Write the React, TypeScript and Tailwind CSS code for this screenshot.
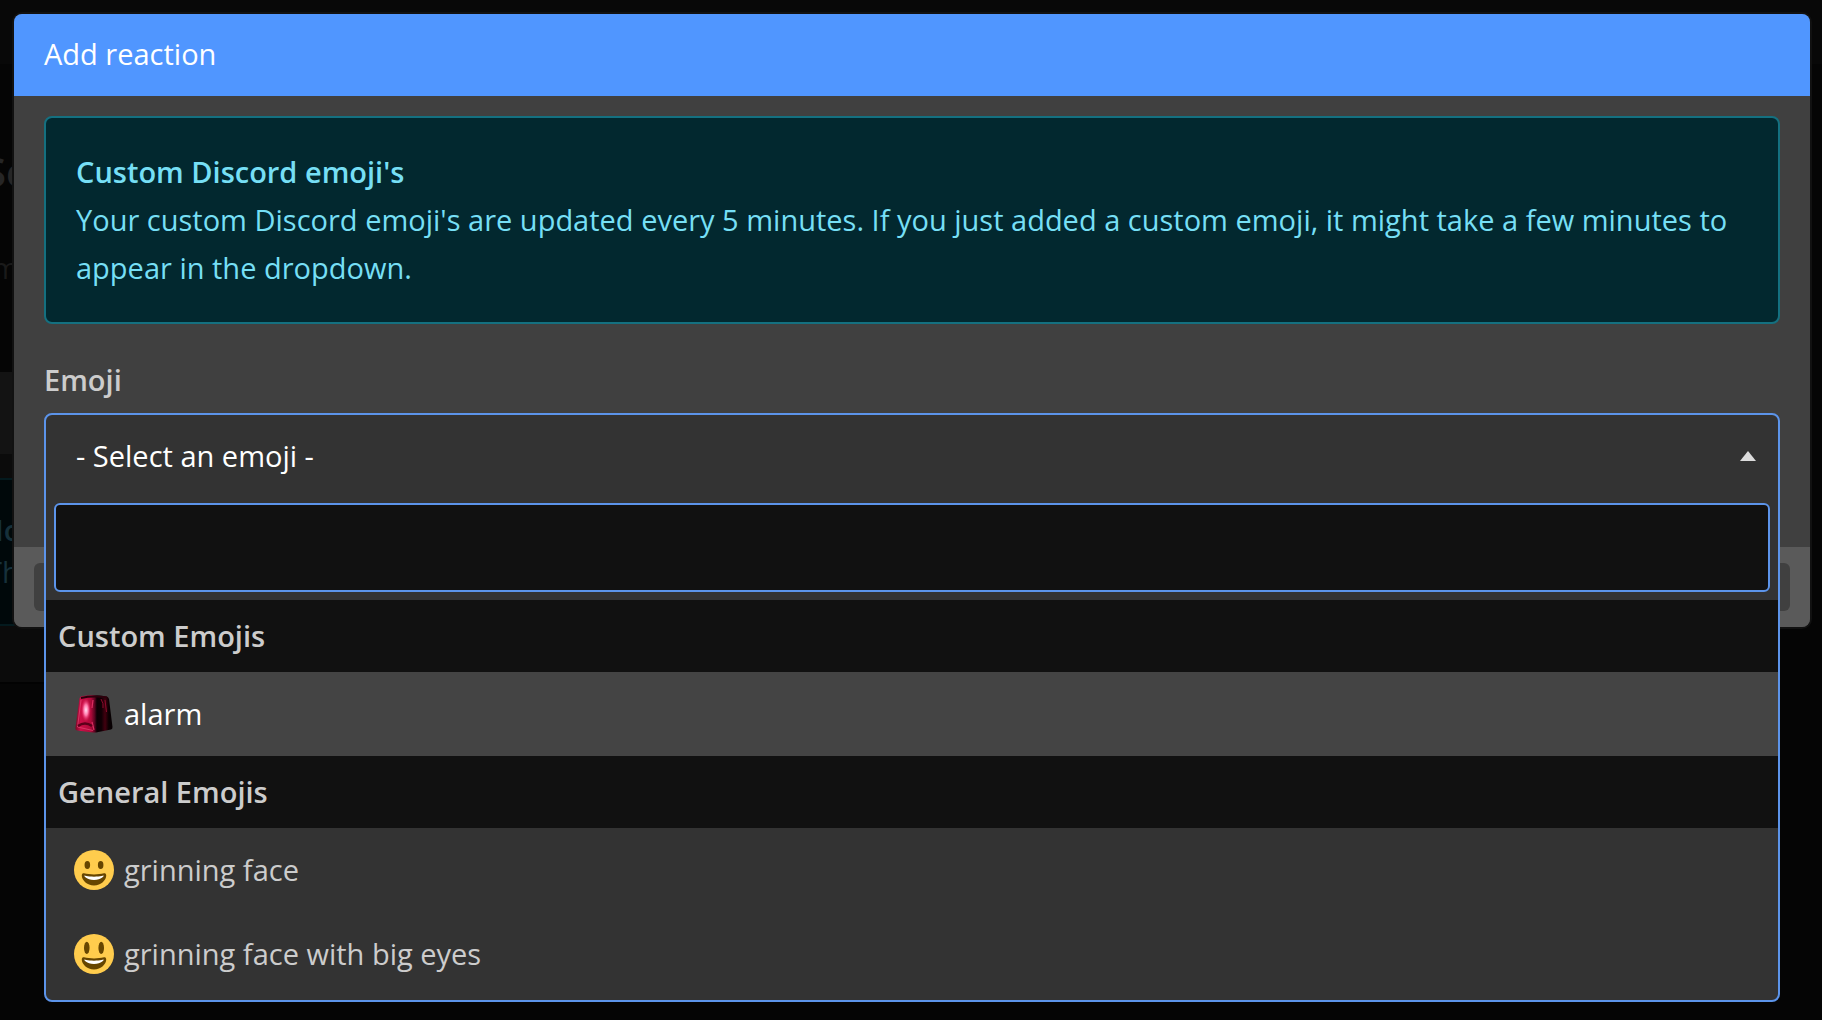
import { useState } from "react";

const groups = [
  {
    label: "Custom Emojis",
    options: [{ name: "alarm", Icon: AlarmIcon }],
  },
  {
    label: "General Emojis",
    options: [
      { name: "grinning face", Icon: GrinningIcon },
      { name: "grinning face with big eyes", Icon: BigEyesIcon },
    ],
  },
];

function AlarmIcon() {
  return (
    <svg viewBox="0 0 40 40" className="size-10 shrink-0" aria-hidden="true">
      <defs>
        <linearGradient id="alarm-glass" x1="0" x2="1" y1="0" y2="0">
          <stop offset="0" stopColor="#7a0826" />
          <stop offset="0.14" stopColor="#cc0f48" />
          <stop offset="0.42" stopColor="#b00a3a" />
          <stop offset="0.52" stopColor="#5a0420" />
          <stop offset="0.58" stopColor="#0c0004" />
          <stop offset="0.7" stopColor="#100005" />
          <stop offset="0.8" stopColor="#42000f" />
          <stop offset="0.9" stopColor="#0a0002" />
          <stop offset="1" stopColor="#060002" />
        </linearGradient>
        <radialGradient id="alarm-glow">
          <stop offset="0" stopColor="#ffe3f4" />
          <stop offset="0.45" stopColor="#ff78aa" />
          <stop offset="1" stopColor="#e0124f" stopOpacity="0" />
        </radialGradient>
      </defs>
      <path
        d="M5.5 4.5C6 2.8 7 2.2 9 1.900Q20 .6 32 2.200Q34.500 2.600 35 5L38.500 33Q38.600 35 37 35.500L22 38.500Q20 38.800 17 38.300L3 36.500Q1.200 36 1.400 34Z"
        fill="url(#alarm-glass)"
      />
      <path d="M7 4Q19 1.500 33 3.500" fill="none" stroke="#2c000c" strokeWidth="2" />
      <path d="M7 6L3.500 33L19 36.500" fill="none" stroke="#e0406e" strokeWidth="0.800" />
      <path d="M19 6L18 14M18 28L20 36" fill="none" stroke="#dc2e62" strokeWidth="1.200" />
      <path d="M27 5Q30 10 29 14M31 6L32.500 18" fill="none" stroke="#8c0b2c" strokeWidth="1" />
      <path d="M4 32Q11 27 18 32" fill="none" stroke="#5c001a" strokeWidth="2.500" />
      <ellipse cx="12" cy="16" rx="5" ry="12" fill="url(#alarm-glow)" />
    </svg>
  );
}

function GrinningIcon() {
  return (
    <svg viewBox="0 0 36 36" className="size-10 shrink-0" aria-hidden="true">
      <circle cx="18" cy="18" r="18" fill="#ffcc4d" />
      <ellipse cx="12" cy="13.500" rx="2.500" ry="3.500" fill="#664500" />
      <ellipse cx="24" cy="13.500" rx="2.500" ry="3.500" fill="#664500" />
      <path
        d="M18 22c-3.623 0-6.027-.422-9-1-.679-.131-2 0-2 2 0 4 4.595 9 11 9 6.404 0 11-5 11-9 0-2-1.321-2.132-2-2-2.973.578-5.377 1-9 1z"
        fill="#664500"
      />
      <path d="M9 23s3 1 9 1 9-1 9-1-2 4-9 4-9-4-9-4z" fill="#fff" />
    </svg>
  );
}

function BigEyesIcon() {
  return (
    <svg viewBox="0 0 36 36" className="size-10 shrink-0" aria-hidden="true">
      <circle cx="18" cy="18" r="18" fill="#ffcc4d" />
      <ellipse cx="11.500" cy="12.500" rx="2.500" ry="5.500" fill="#664500" />
      <ellipse cx="24.500" cy="12.500" rx="2.500" ry="5.500" fill="#664500" />
      <path
        d="M18 22c-3.623 0-6.027-.422-9-1-.679-.131-2 0-2 2 0 4 4.595 9 11 9 6.404 0 11-5 11-9 0-2-1.321-2.132-2-2-2.973.578-5.377 1-9 1z"
        fill="#664500"
      />
      <path d="M9 23s3 1 9 1 9-1 9-1-2 4-9 4-9-4-9-4z" fill="#fff" />
    </svg>
  );
}

// The dimmed page under the dialog, its left edge is scrolled out of view
function Backdrop() {
  return (
    <div aria-hidden="true" className="overflow-hidden">
      <div className="h-16 bg-[#080808]" />
      <div className="-ml-4 h-[308px] pt-[84px]">
        <div className="text-[40px] font-semibold text-[#262626]">Se</div>
        <div className="mt-12 pl-2 text-[#1a1a1a]">m</div>
      </div>
      <div className="w-3/4">
        <div className="h-[82px] bg-[#131313]" />
        <div className="h-[230px] border-b-2 border-[#020202] bg-[#0b0b0b] pt-6">
          <div className="-ml-5 h-[148px] border-2 border-[#041a1e] bg-[#00080a] pt-[26px] text-[#16303a]">
            <div className="font-semibold">Ho</div>
            <div className="pl-1 leading-9">Th</div>
          </div>
        </div>
      </div>
    </div>
  );
}

export default function App() {
  const [selected, setSelected] = useState("alarm");
  const [search, setSearch] = useState("");

  return (
    <div className="relative min-h-screen bg-[#050505] font-['Open_Sans',sans-serif] text-[29px] leading-[48px] text-[#ccc]">
      <Backdrop />
      <div className="absolute inset-x-0 top-0 pt-3 pr-[10px] pl-3">
        <div
          role="dialog"
          aria-labelledby="dialog-title"
          className="rounded-[10px] border-2 border-[#111] bg-[#404040] font-medium"
        >
          <h1
            id="dialog-title"
            className="rounded-t-lg bg-[#5096ff] px-[30px] pt-4 pb-[18px] text-white"
          >
            Add reaction
          </h1>
          <div className="px-[30px] pt-5 pb-[50px]">
            <div className="rounded-lg border-2 border-[#147080] bg-[#02282f] p-[30px] text-[#76dff5]">
              <strong className="block font-semibold">
                Custom Discord emoji's
              </strong>
              <p>
                Your custom Discord emoji's are updated every 5 minutes. If you
                just added a custom emoji, it might take a few minutes to appear
                in the dropdown.
              </p>
            </div>
            <label htmlFor="emoji" className="mt-8 block font-semibold">
              Emoji
            </label>
            <div className="relative mt-[9px] h-[84px]">
              <div className="absolute inset-x-0 top-0 z-10 rounded-lg border-2 border-[#5c94ea] bg-[#333]">
                <button
                  id="emoji"
                  type="button"
                  aria-expanded="true"
                  className="flex h-[82px] w-full items-center justify-between pr-[22px] pl-[30px] text-white"
                >
                  - Select an emoji -
                  <svg viewBox="0 0 16 10" className="h-[10px] w-4 fill-[#ddd]">
                    <path d="M8 0l8 10H0z" />
                  </svg>
                </button>
                <div className="px-2 pt-[6px] pb-2">
                  <input
                    type="search"
                    aria-label="Search emojis"
                    value={search}
                    onChange={(e) => setSearch(e.target.value)}
                    className="block h-[89px] w-full rounded-md border-2 border-[#5c94ea] bg-[#111] px-5 outline-none"
                  />
                </div>
                <div role="listbox" aria-label="Emojis" className="pb-1">
                  {groups.map((group) => (
                    <div role="group" aria-label={group.label} key={group.label}>
                      <div className="bg-[#111] px-3 py-3 font-semibold">
                        {group.label}
                      </div>
                      {group.options.map(({ name, Icon }) => (
                        <button
                          type="button"
                          role="option"
                          aria-selected={selected === name}
                          key={name}
                          onClick={() => setSelected(name)}
                          className="flex h-[84px] w-full items-center gap-[10px] px-7 aria-selected:bg-[#444] aria-selected:text-white"
                        >
                          <Icon />
                          {name}
                        </button>
                      ))}
                    </div>
                  ))}
                </div>
              </div>
            </div>
          </div>
          <div className="flex justify-between rounded-b-lg bg-[#5a5a5a] px-5 py-4">
            <button
              type="button"
              aria-label="Cancel"
              className="h-12 w-32 rounded-md bg-[#404040]"
            />
            <button
              type="button"
              aria-label="Save"
              className="h-12 w-32 rounded-md bg-[#404040]"
            />
          </div>
        </div>
      </div>
    </div>
  );
}
